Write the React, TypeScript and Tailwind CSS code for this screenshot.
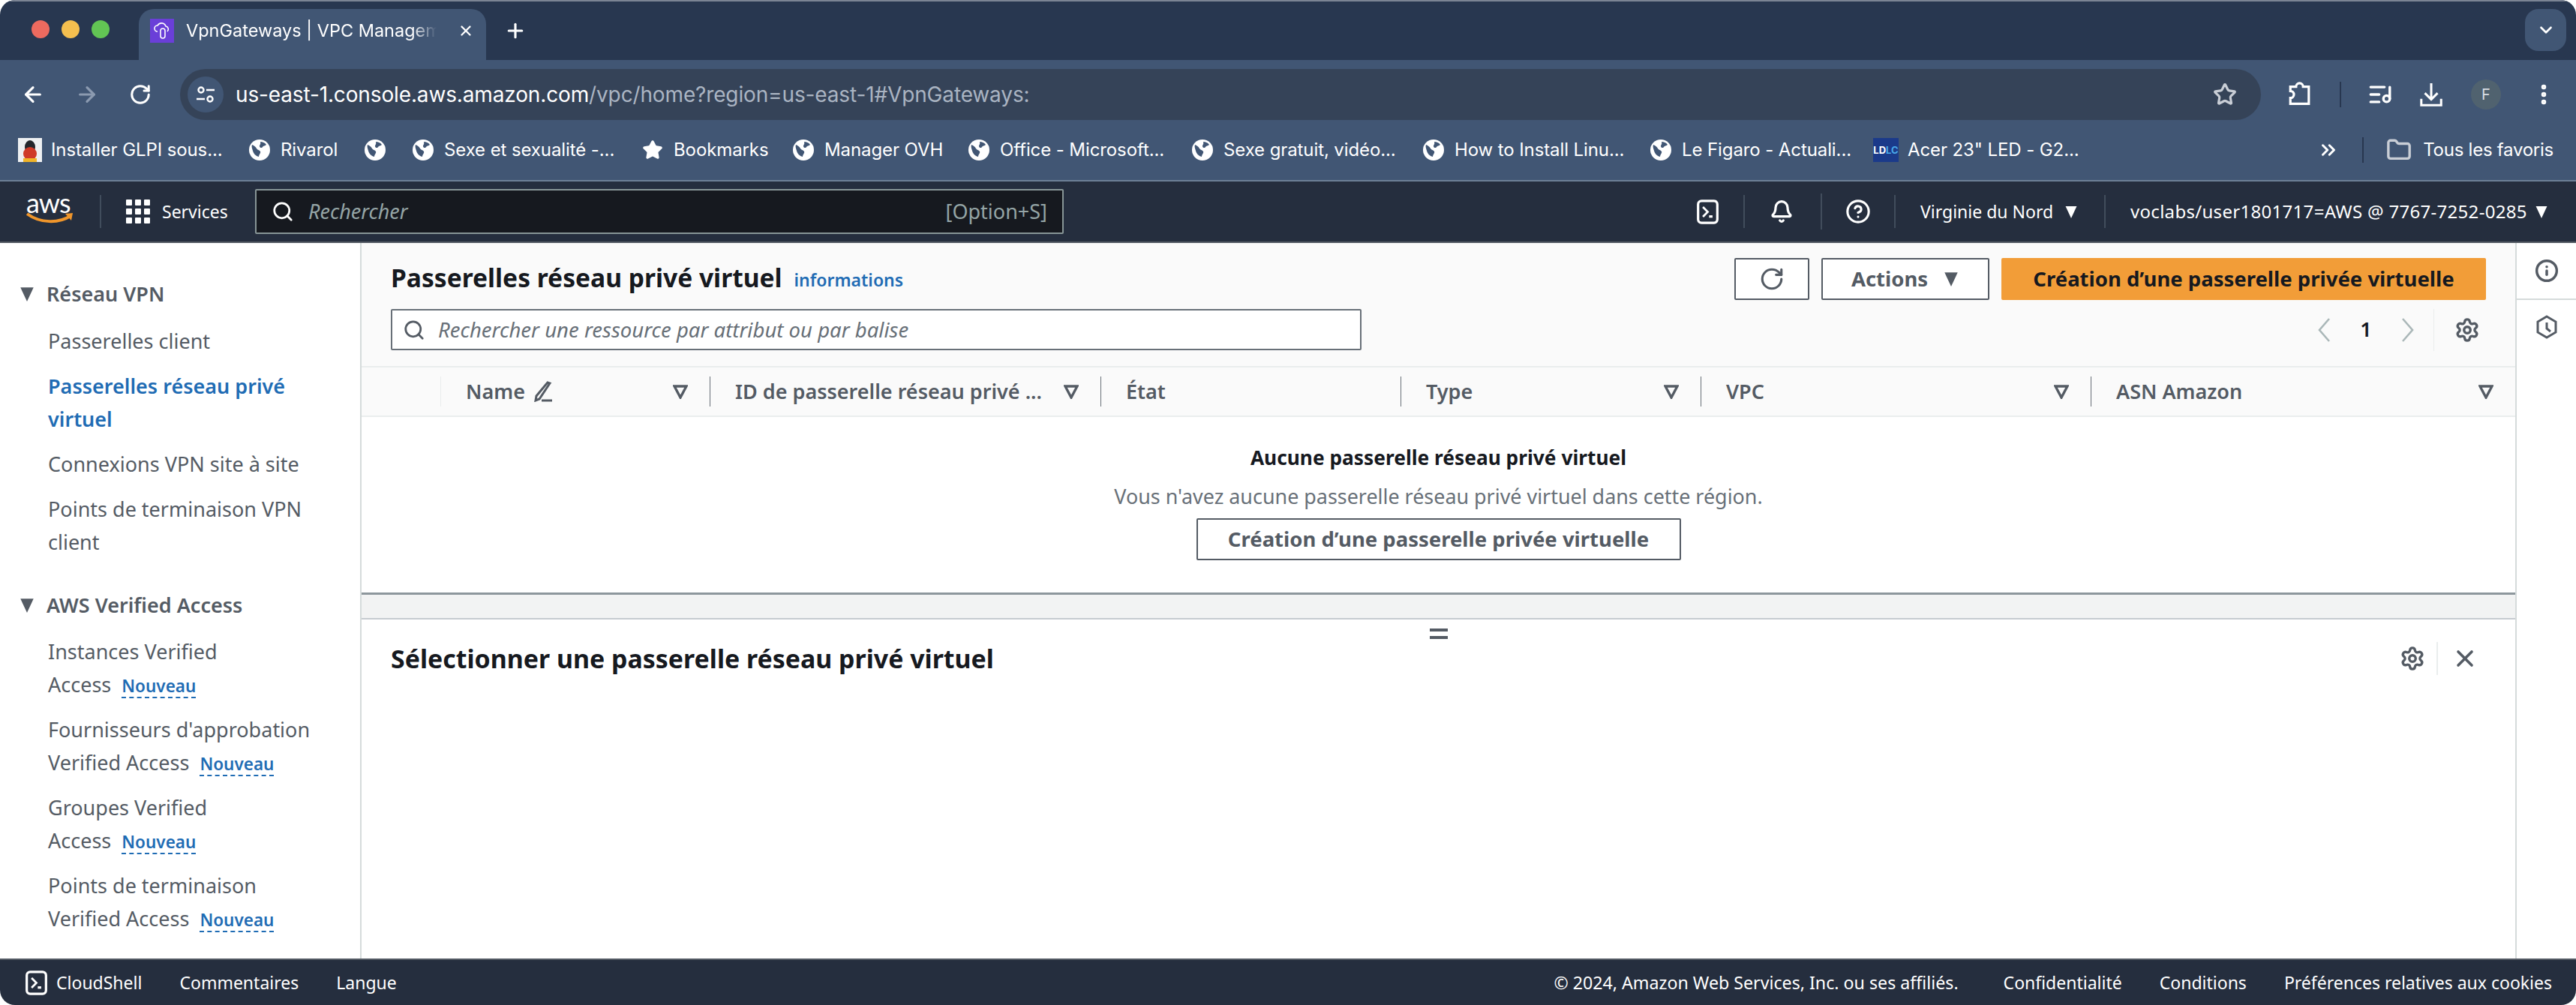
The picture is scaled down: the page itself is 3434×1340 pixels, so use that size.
import React from 'react';
import { ArrowLeft, ArrowRight, RotateCw, Star, ChevronDown, ChevronsRight, Folder, Bell, CircleHelp, Settings, X, Plus, Search, ListMusic, MoreVertical, Info } from 'lucide-react';

const chrome = { fontFamily: 'Inter, "Liberation Sans", sans-serif' };
const aws = { fontFamily: '"Noto Sans", "Open Sans", sans-serif' };

const Globe = () => (
  <svg viewBox="0 0 28 28" className="w-7 h-7 shrink-0">
    <circle cx="14" cy="14" r="14" fill="#fff" />
    <path d="M4 7c3 1 5 3 6 5s4 2 5 4-2 4-2 7c-4-1-7-4-8-8-1-3-2-6-1-8zM15 3c3 0 6 1 8 4-2 2-4 1-5 3s-4 1-4-1 2-3 1-6z" fill="#415674" />
  </svg>
);

const Term = ({ c = 'w-[33px] h-[33px]' }: { c?: string }) => (
  <svg viewBox="0 0 32 36" className={c + ' shrink-0'} fill="none">
    <rect x="2" y="2" width="28" height="32" rx="5" stroke="#fff" strokeWidth="3.5" />
    <path d="M9 11l7 7-7 7" stroke="#fff" strokeWidth="3" />
    <rect x="18" y="23" width="5" height="3.5" fill="#fff" />
  </svg>
);

const Caret = ({ c = 'w-3.5 h-4', fill = '#fff' }: { c?: string; fill?: string }) => (
  <svg viewBox="0 0 14 16" className={c + ' shrink-0'}><path d="M0 1h14L7 16z" fill={fill} /></svg>
);

const Filter = () => (
  <svg viewBox="0 0 20 20" className="w-[20px] h-[20px] shrink-0" fill="none"><path d="M2 3h16L10 18z" stroke="#545b64" strokeWidth="3.4" /></svg>
);

const bookmarks = [
  { t: 'Installer GLPI sous...', i: 'tux', w: 228 },
  { t: 'Rivarol', i: 'g', w: 76 },
  { t: '', i: 'g', w: 0 },
  { t: 'Sexe et sexualité -...', i: 'g', w: 228 },
  { t: 'Bookmarks', i: 's', w: 123 },
  { t: 'Manager OVH', i: 'g', w: 156 },
  { t: 'Office - Microsoft...', i: 'g', w: 220 },
  { t: 'Sexe gratuit, vidéo...', i: 'g', w: 230 },
  { t: 'How to Install Linu...', i: 'g', w: 225 },
  { t: 'Le Figaro - Actuali...', i: 'g', w: 219 },
  { t: 'Acer 23" LED - G2...', i: 'l', w: 228 },
];

const NavLink = ({ lines, active, isNew }: { lines: string[]; active?: boolean; isNew?: boolean }) => (
  <div className={'pl-[64px] text-[27px] leading-[44px] mb-4 ' + (active ? 'text-[#1f6cb4] font-semibold' : 'text-[#545b64]')}>
    {lines.map((l, i) => (
      <div key={i} className="whitespace-nowrap">
        {l}
        {isNew && i === lines.length - 1 && (
          <span className="ml-[14px] text-[22.5px] font-semibold text-[#1f6cb4] border-b-2 border-dashed border-[#1f6cb4] leading-[28px] inline-block">Nouveau</span>
        )}
      </div>
    ))}
  </div>
);

const NavHead = ({ t, c }: { t: string; c: string }) => (
  <div className={'flex items-center gap-[16px] pl-[26px] h-[44px] text-[27px] font-semibold text-[#545b64] ' + c}>
    <Caret c="w-[20px] h-[20px]" fill="#545b64" />
    {t}
  </div>
);

const cols = [
  { w: 'w-[105px]', t: '', f: false, first: true },
  { w: 'w-[359px]', t: 'Name', f: true, edit: true, light: true },
  { w: 'w-[521px]', t: 'ID de passerelle réseau privé ...', f: true },
  { w: 'w-[400px]', t: 'État', f: false },
  { w: 'w-[400px]', t: 'Type', f: true },
  { w: 'w-[520px]', t: 'VPC', f: true },
  { w: 'flex-1', t: 'ASN Amazon', f: true },
];

export default function App() {
  return (
    <div className="w-full h-[1340px] bg-white overflow-hidden">
      <div className="h-full flex flex-col overflow-hidden rounded-[20px]">
        {/* tab strip */}
        <div className="h-[80px] bg-[#283750] border-t-2 border-[#7b8494] flex items-end pl-[42px] pr-[13px] shrink-0" style={chrome}>
          <div className="flex gap-[16px] h-[78px] items-center pb-[4px] w-[143px]">
            <span className="w-6 h-6 rounded-full bg-[#ed6a5f]" />
            <span className="w-6 h-6 rounded-full bg-[#f5bf4f]" />
            <span className="w-6 h-6 rounded-full bg-[#62c554]" />
          </div>
          <div className="w-[463px] h-[68px] bg-[#415674] rounded-t-[20px] flex items-center pl-[15px] pr-[16px] pb-[10px] text-white text-[23.5px]">
            <svg viewBox="0 0 32 32" className="w-8 h-8 shrink-0"><rect width="32" height="32" fill="#6a3fd8" /><path d="M10 17a4 4 0 0 1 0-8 6 6 0 0 1 11 1 4 4 0 0 1 2 7" fill="none" stroke="#fff" strokeWidth="1.6" /><rect x="14" y="13" width="6" height="13" rx="3" fill="none" stroke="#fff" strokeWidth="1.6" /></svg>
            <span className="ml-[16px] w-[334px] overflow-hidden whitespace-nowrap [mask-image:linear-gradient(to_right,black_90%,transparent)]">VpnGateways | VPC Management</span>
            <X className="ml-auto text-white shrink-0" size={22} strokeWidth={2.5} />
          </div>
          <div className="h-[68px] flex items-center ml-[24px] pb-[10px]"><Plus className="text-white" size={30} strokeWidth={2.5} /></div>
          <div className="ml-auto self-start mt-[10px] w-[55px] h-[56px] rounded-[18px] bg-[#415674] flex items-center justify-center"><ChevronDown className="text-white" size={26} strokeWidth={2.5} /></div>
        </div>
        {/* toolbar */}
        <div className="h-[80px] bg-[#415674] flex items-center shrink-0 pt-[12px]" style={chrome}>
          <div className="flex items-center w-[240px] pl-[28px] gap-[40px]">
            <ArrowLeft className="text-white" size={32} strokeWidth={2.4} />
            <ArrowRight className="text-[#8b9ab0]" size={32} strokeWidth={2.4} />
            <RotateCw className="text-white" size={30} strokeWidth={2.4} />
          </div>
          <div className="w-[2774px] h-[68px] bg-[#354358] rounded-full flex items-center pl-[10px] pr-[32px]">
            <div className="w-[48px] h-[48px] rounded-full bg-[#415674] flex items-center justify-center">
              <svg viewBox="0 0 28 28" className="w-7 h-7" fill="none" stroke="#fff" strokeWidth="2.4"><circle cx="8" cy="8" r="3.5" /><path d="M15 8h11M2 20h11" /><circle cx="20" cy="20" r="3.5" /></svg>
            </div>
            <div className="ml-[16px] text-[28px] whitespace-nowrap tracking-[-0.14px]"><span className="text-white">us-east-1.console.aws.amazon.com</span><span className="text-[#aab4c2]">/vpc/home?region=us-east-1#VpnGateways:</span></div>
            <Star className="ml-auto text-[#c9ced6]" size={32} strokeWidth={2.4} />
          </div>
          <div className="flex-1 flex items-center pl-[35px] pr-[26px]">
            <svg viewBox="0 0 32 36" className="w-[33px] h-[34px]" fill="none" stroke="#fff" strokeWidth="3.4"><path d="M3 7h8a5 5 0 0 1 10 0h8v24H3V23a5 5 0 0 0 0-10z" /></svg>
            <span className="w-[2px] h-[34px] bg-[#283750] ml-[37px]" />
            <ListMusic className="text-white ml-[35px]" size={34} strokeWidth={2.4} />
            <svg viewBox="0 0 32 36" className="w-[32px] h-[34px] ml-[35px]" fill="none" stroke="#fff" strokeWidth="3.2"><path d="M16 2v23M7 16l9 9 9-9M2 24v9h28v-9" /></svg>
            <span className="ml-[37px] w-[40px] h-[40px] rounded-full bg-[#50626f] text-[#d9dee4] text-[20px] flex items-center justify-center">F</span>
            <MoreVertical className="text-white ml-auto" size={34} strokeWidth={2.6} />
          </div>
        </div>
        {/* bookmarks */}
        <div className="h-[82px] bg-[#415674] border-b-2 border-[#6d8096] flex items-center pl-[24px] pr-[30px] text-white text-[24px] shrink-0" style={chrome}>
          <div className="flex items-center gap-[36px]">
            {bookmarks.map((b, i) => (
              <div key={i} className={'flex items-center ' + (b.i === 'tux' || b.i === 'l' ? 'gap-[12px]' : 'gap-[14px]')}>
                {b.i === 'g' && <Globe />}
                {b.i === 's' && <Star className="fill-white text-white shrink-0" size={28} />}
                {b.i === 'tux' && (
                  <svg viewBox="0 0 32 32" className="w-8 h-8 shrink-0"><rect width="32" height="32" fill="#eef0f2" /><ellipse cx="16" cy="12" rx="7" ry="9" fill="#23262c" /><ellipse cx="16" cy="21" rx="9" ry="9" fill="#cf3a28" /><rect x="7" y="27" width="18" height="5" fill="#f0b428" /></svg>
                )}
                {b.i === 'l' && (
                  <span className="w-[34px] h-8 shrink-0 bg-[#1b3a8a] flex items-center justify-center text-[13px] leading-none font-bold text-white">LD<span className="text-[#49a7e8]">LC</span></span>
                )}
                {b.t && <span className="whitespace-nowrap tracking-[-0.1px]" style={{ width: b.w }}>{b.t}</span>}
              </div>
            ))}
          </div>
          <div className="ml-auto flex items-center">
            <ChevronsRight className="text-white" size={30} strokeWidth={2.4} />
            <span className="w-[2px] h-[34px] bg-[#283750] mx-[30px]" />
            <Folder className="text-[#c9ced6] shrink-0" size={34} strokeWidth={2.4} />
            <span className="ml-[15px] whitespace-nowrap tracking-[-0.25px]">Tous les favoris</span>
          </div>
        </div>
        {/* aws nav */}
        <div className="h-[82px] bg-[#252e3e] border-b-2 border-[#545b64] flex items-center text-white text-[23px] shrink-0" style={aws}>
          <div className="w-[133px] pl-[35px] flex flex-col items-start">
            <span className="text-[36px] leading-[26px] tracking-[-1px] -mt-2" style={{ fontFamily: 'Lato, sans-serif' }}>aws</span>
            <svg viewBox="0 0 64 16" className="w-[64px] h-[16px]"><path d="M1 2c18 13 42 13 58 3" fill="none" stroke="#f0962b" strokeWidth="4" /><path d="M52 2l10-1-2 10z" fill="#f0962b" /></svg>
          </div>
          <span className="w-[2px] h-[44px] bg-[#414d5c]" />
          <svg viewBox="0 0 32 32" className="w-8 h-8 ml-[33px] fill-white"><rect width="8" height="8" rx="1" /><rect x="12" width="8" height="8" rx="1" /><rect x="24" width="8" height="8" rx="1" /><rect y="12" width="8" height="8" rx="1" /><rect x="12" y="12" width="8" height="8" rx="1" /><rect x="24" y="12" width="8" height="8" rx="1" /><rect y="24" width="8" height="8" rx="1" /><rect x="12" y="24" width="8" height="8" rx="1" /><rect x="24" y="24" width="8" height="8" rx="1" /></svg>
          <span className="ml-[16px] w-[124px]">Services</span>
          <div className="w-[1078px] h-[60px] bg-[#16191f] border-2 border-[#879596] rounded-[2px] flex items-center pl-[20px] pr-[20px] text-[#95a5a6]">
            <Search className="text-white" size={30} strokeWidth={2.2} />
            <span className="italic ml-[19px] text-[27px]">Rechercher</span>
            <span className="ml-auto text-[27px]">[Option+S]</span>
          </div>
          <div className="ml-[842px]"><Term /></div>
          <span className="ml-[31px] w-[2px] h-[44px] bg-[#414d5c]" />
          <Bell className="ml-[33px] text-white" size={32} strokeWidth={2.4} />
          <span className="ml-[36px] w-[2px] h-[48px] bg-[#414d5c]" />
          <CircleHelp className="ml-[31px] text-white" size={34} strokeWidth={2.2} />
          <span className="ml-[31px] w-[2px] h-[44px] bg-[#414d5c]" />
          <span className="ml-[33px] w-[181px] whitespace-nowrap">Virginie du Nord</span>
          <Caret c="ml-[12px] w-[16px] h-[17px]" />
          <span className="ml-[36px] w-[2px] h-[44px] bg-[#414d5c]" />
          <span className="ml-[33px] w-[528px] whitespace-nowrap text-[24px] tracking-[0.3px]">voclabs/user1801717=AWS @ 7767-7252-0285</span>
          <Caret c="ml-[12px] w-[16px] h-[17px]" />
        </div>
        {/* body */}
        <div className="flex-1 flex min-h-0" style={aws}>
          <aside className="w-[482px] border-r-2 border-[#d5dbdb] pt-[46px] shrink-0 overflow-hidden">
            <NavHead t="Réseau VPN" c="mb-[19px]" />
            <NavLink lines={['Passerelles client']} />
            <NavLink lines={['Passerelles réseau privé', 'virtuel']} active />
            <NavLink lines={['Connexions VPN site à site']} />
            <NavLink lines={['Points de terminaison VPN', 'client']} />
            <div className="h-[24px]" />
            <NavHead t="AWS Verified Access" c="mb-[18px]" />
            <NavLink lines={['Instances Verified', 'Access']} isNew />
            <NavLink lines={["Fournisseurs d'approbation", 'Verified Access']} isNew />
            <NavLink lines={['Groupes Verified', 'Access']} isNew />
            <NavLink lines={['Points de terminaison', 'Verified Access']} isNew />
          </aside>
          <main className="flex-1 min-w-0 flex flex-col">
            <div className="bg-[#fafafa] h-[164px] px-[39px] pt-[20px] shrink-0">
              <div className="flex items-start h-[56px]">
                <h1 className="text-[33.6px] font-bold text-[#16191f] leading-[52px] whitespace-nowrap">Passerelles réseau privé virtuel</h1>
                <span className="ml-[16px] text-[23px] font-semibold text-[#1f6cb4] leading-[58px]">informations</span>
                <div className="ml-auto flex gap-[16px]">
                  <button className="w-[100px] h-[56px] bg-white border-2 border-[#545b64] rounded-[2px] flex items-center justify-center"><RotateCw className="text-[#545b64]" size={34} strokeWidth={2.2} /></button>
                  <button className="w-[224px] h-[56px] bg-white border-2 border-[#545b64] rounded-[2px] flex items-center justify-center gap-[20px] text-[27.5px] font-bold text-[#545b64]">Actions <Caret c="w-[22px] h-[20px]" fill="#545b64" /></button>
                  <button className="w-[646px] h-[56px] bg-[#f29d38] rounded-[2px] text-[27.5px] font-bold text-[#16191f] whitespace-nowrap">Création d’une passerelle privée virtuelle</button>
                </div>
              </div>
              <div className="flex items-center h-[55px] mt-[12px]">
                <div className="w-[1294px] h-[55px] bg-white border-2 border-[#687078] rounded-[2px] flex items-center pl-[14px]">
                  <Search className="text-[#545b64]" size={30} strokeWidth={2.2} />
                  <span className="ml-[17px] text-[27.5px] italic text-[#687078] whitespace-nowrap">Rechercher une ressource par attribut ou par balise</span>
                </div>
                <div className="ml-auto flex items-center h-[56px]">
                  <svg viewBox="0 0 18 32" className="w-[18px] h-[32px]" fill="none" stroke="#aab7b8" strokeWidth="2.6"><path d="M16 1L3 16l13 15" /></svg>
                  <span className="w-[94px] text-center text-[27px] font-semibold text-[#16191f]">1</span>
                  <svg viewBox="0 0 18 32" className="w-[18px] h-[32px]" fill="none" stroke="#aab7b8" strokeWidth="2.6"><path d="M2 1l13 15L2 31" /></svg>
                  <span className="ml-[25px] w-[1px] h-[56px] bg-[#eaeded]" />
                  <Settings className="ml-[27px] mr-[8px] text-[#545b64]" size={34} strokeWidth={2.4} />
                </div>
              </div>
            </div>
            <div className="h-[68px] bg-[#fafafa] border-y-2 border-[#eaeded] flex items-center shrink-0">
              {cols.map((c, i) => (
                <div key={i} className={c.w + ' h-[40px] flex items-center ' + (c.first ? '' : 'border-l pl-[33px] pr-[29px] ' + (c.light ? 'border-[#eaeded]' : 'border-[#687078]'))}>
                  <span className="text-[27px] font-semibold text-[#545b64] whitespace-nowrap">{c.t}</span>
                  {c.edit && <svg viewBox="0 0 28 28" className="w-7 h-7 ml-[10px]" fill="none" stroke="#545b64" strokeWidth="3"><path d="M23 3L9 24l-5 2 1-6L20 2zM12 26h14" /></svg>}
                  {c.f && <span className="ml-auto"><Filter /></span>}
                </div>
              ))}
            </div>
            <div className="h-[234px] bg-white flex flex-col items-center shrink-0 pt-[32px]">
              <div className="text-[26.3px] font-bold text-[#16191f] leading-[44px] whitespace-nowrap">Aucune passerelle réseau privé virtuel</div>
              <div className="text-[26.9px] text-[#687078] leading-[44px] mt-[8px] whitespace-nowrap">Vous n'avez aucune passerelle réseau privé virtuel dans cette région.</div>
              <button className="w-[646px] h-[56px] mt-[7px] bg-white border-2 border-[#545b64] rounded-[2px] text-[27.5px] font-bold text-[#545b64] whitespace-nowrap shrink-0">Création d’une passerelle privée virtuelle</button>
            </div>
            <div className="h-[36px] bg-[#f2f3f3] border-t-[3px] border-b-2 border-t-[#8d979c] border-b-[#c6cbd0] shrink-0" />
            <div className="flex-1 relative px-[39px] pt-[30px]">
              <div className="absolute left-1/2 top-[12px] -translate-x-1/2 w-[24px] h-[14px] flex flex-col justify-between">
                <span className="h-[4px] bg-[#545b64]" /><span className="h-[4px] bg-[#545b64]" />
              </div>
              <div className="flex items-center h-[44px]">
                <h2 className="text-[33.9px] font-bold text-[#16191f] whitespace-nowrap">Sélectionner une passerelle réseau privé virtuel</h2>
                <Settings className="ml-auto text-[#545b64]" size={34} strokeWidth={2.4} />
                <span className="ml-[15px] w-[2px] h-[44px] bg-[#eaeded]" />
                <X className="ml-[18px] mr-[10px] text-[#545b64]" size={36} strokeWidth={2.4} />
              </div>
            </div>
          </main>
          <aside className="w-[81px] shrink-0 border-l-2 border-[#d5dbdb] flex flex-col items-center">
            <div className="h-[76px] w-full border-b-2 border-[#d5dbdb] flex items-center justify-center"><Info className="text-[#545b64]" size={32} strokeWidth={2.6} /></div>
            <svg viewBox="0 0 28 32" className="w-[28px] h-[32px] mt-[20px]" fill="none" stroke="#545b64" strokeWidth="3"><path d="M14 2l12 7v14l-12 7-12-7V9zM14 10v8l5 4" /></svg>
          </aside>
        </div>
        {/* footer */}
        <div className="h-[62px] bg-[#252e3e] border-t-2 border-[#545b64] flex items-center text-white text-[23px] pl-[32px] pr-[32px] shrink-0" style={aws}>
          <Term />
          <span className="ml-[10px] whitespace-nowrap">CloudShell</span>
          <span className="ml-[50px] whitespace-nowrap">Commentaires</span>
          <span className="ml-[50px] whitespace-nowrap">Langue</span>
          <span className="ml-auto whitespace-nowrap text-[23.2px]">© 2024, Amazon Web Services, Inc. ou ses affiliés.</span>
          <span className="ml-[60px] whitespace-nowrap">Confidentialité</span>
          <span className="ml-[50px] whitespace-nowrap">Conditions</span>
          <span className="ml-[50px] whitespace-nowrap">Préférences relatives aux cookies</span>
        </div>
      </div>
    </div>
  );
}
